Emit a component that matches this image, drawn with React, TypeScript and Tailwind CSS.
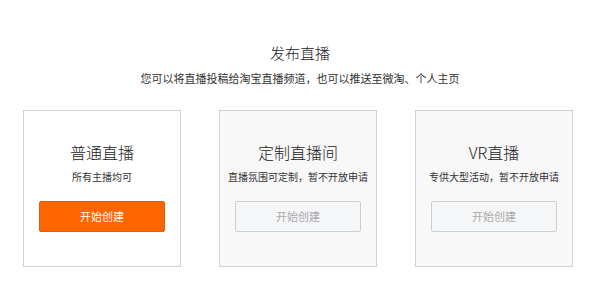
import React from 'react';

interface LiveType {
  title: string;
  desc: string;
  enabled: boolean;
}

const types: LiveType[] = [
  { title: '普通直播', desc: '所有主播均可', enabled: true },
  { title: '定制直播间', desc: '直播氛围可定制，暂不开放申请', enabled: false },
  { title: 'VR直播', desc: '专供大型活动，暂不开放申请', enabled: false },
];

const App: React.FC = () => {
  return (
    <div
      className="w-[600px] h-[304px] bg-white flex flex-col text-[#333]"
      style={{ fontFamily: '"Noto Sans CJK SC", "Noto Sans", sans-serif' }}
    >
      {/* Header */}
      <div className="flex flex-col items-center pt-[43px]">
        <h1 className="text-[15px] leading-[20px] font-light text-[#222]">发布直播</h1>
        <p className="mt-[7px] text-[11px] leading-[16px] text-[#333]">
          您可以将直播投稿给淘宝直播频道，也可以推送至微淘、个人主页
        </p>
      </div>

      {/* Cards */}
      <div className="flex gap-[38px] pl-[23px] mt-[24px]">
        {types.map((t) => (
          <div
            key={t.title}
            className={`w-[158px] h-[157px] border border-[#d2d2d2] flex flex-col items-center pt-[30px] ${
              t.enabled ? 'bg-white' : 'bg-[#f8f8f8]'
            }`}
          >
            <h2 className="text-[16px] leading-[22px] font-light text-[#222]">{t.title}</h2>
            <p className="mt-[7px] text-[10px] leading-[14px] text-[#333] whitespace-nowrap">{t.desc}</p>
            {t.enabled ? (
              <button className="mt-[17px] w-[126px] h-[31px] rounded-[2px] bg-[#ff6600] border border-[#e85c00] text-white text-[11px]">
                开始创建
              </button>
            ) : (
              <button
                disabled
                className="mt-[17px] w-[126px] h-[31px] rounded-[2px] bg-[#f5f6f8] border border-[#cfcfcf] text-[#aaa] text-[11px]"
              >
                开始创建
              </button>
            )}
          </div>
        ))}
      </div>
    </div>
  );
};

export default App;
